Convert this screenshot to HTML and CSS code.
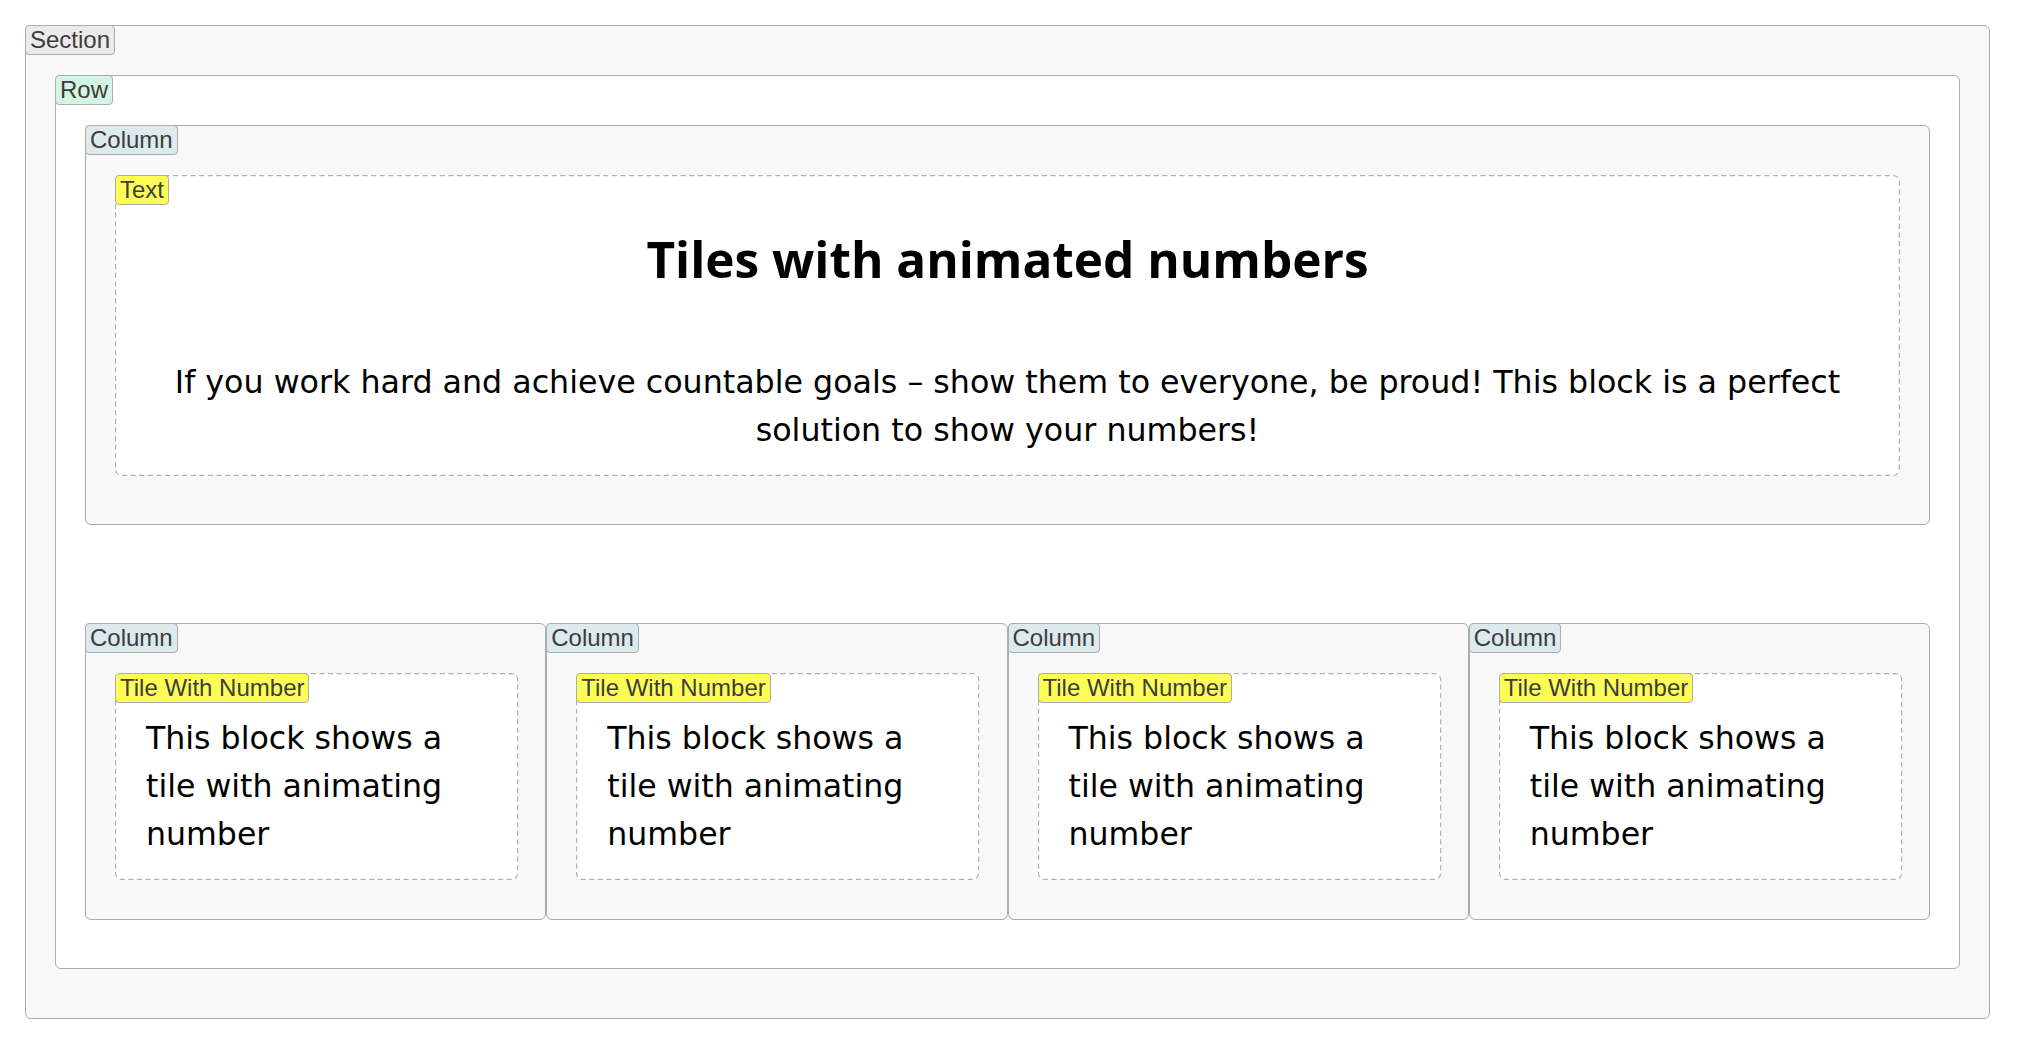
FILE: index.html
```html
<!DOCTYPE html>
<html lang="en">
<head>
<meta charset="utf-8">
<title>Tiles with animated numbers</title>
<link rel="stylesheet" href="styles.css">
</head>
<body>
<div class="box section">
  <span class="tag tag-section">Section</span>
  <div class="box row">
    <span class="tag tag-row">Row</span>
    <div class="box col col-wide">
      <span class="tag tag-col">Column</span>
      <div class="block text-block">
        <svg class="dash" aria-hidden="true"><rect class="dash-rect"></rect></svg>
        <span class="tag tag-block">Text</span>
        <h2 class="title">Tiles with animated numbers</h2>
        <p class="lead">If you work hard and achieve countable goals – show them to everyone, be proud! This block is a perfect solution to show your numbers!</p>
      </div>
    </div>
    <div class="cols">
      <div class="box col col-tile">
        <span class="tag tag-col">Column</span>
        <div class="block tile">
          <svg class="dash" aria-hidden="true"><rect class="dash-rect"></rect></svg>
          <span class="tag tag-block">Tile With Number</span>
          <p class="tile-text">This block shows a tile with animating number</p>
        </div>
      </div>
      <div class="box col col-tile">
        <span class="tag tag-col">Column</span>
        <div class="block tile">
          <svg class="dash" aria-hidden="true"><rect class="dash-rect"></rect></svg>
          <span class="tag tag-block">Tile With Number</span>
          <p class="tile-text">This block shows a tile with animating number</p>
        </div>
      </div>
      <div class="box col col-tile">
        <span class="tag tag-col">Column</span>
        <div class="block tile">
          <svg class="dash" aria-hidden="true"><rect class="dash-rect"></rect></svg>
          <span class="tag tag-block">Tile With Number</span>
          <p class="tile-text">This block shows a tile with animating number</p>
        </div>
      </div>
      <div class="box col col-tile">
        <span class="tag tag-col">Column</span>
        <div class="block tile">
          <svg class="dash" aria-hidden="true"><rect class="dash-rect"></rect></svg>
          <span class="tag tag-block">Tile With Number</span>
          <p class="tile-text">This block shows a tile with animating number</p>
        </div>
      </div>
    </div>
  </div>
</div>
</body>
</html>
```
FILE: styles.css
```css
* { box-sizing: border-box; }

html, body { background: #ffffff; }

body {
  margin: 0;
  padding: 25px 28px 0 25px;
  font-family: "DejaVu Sans", sans-serif;
  color: #000;
}

.box {
  position: relative;
  border: 1px solid #acacac;
  border-radius: 6px;
}

.section {
  background: #f8f8f8;
  padding: 49px 29px 49px 29px;
}

.row {
  background: #ffffff;
  padding: 49px 29px 48px 29px;
  display: flex;
  flex-direction: column;
  gap: 98px;
}

.col {
  background: #f8f8f8;
}

.col-wide {
  padding: 49px 29px 48px 29px;
}

.cols {
  display: flex;
}

.col-tile {
  flex: 1 1 0;
  min-width: 0;
  padding: 49px 27px 39px 29px;
}

.block {
  position: relative;
  background: #ffffff;
  border: 1px solid transparent;
  border-radius: 6px;
}

.dash {
  position: absolute;
  top: -1px;
  left: -1px;
  width: calc(100% + 2px);
  height: calc(100% + 2px);
  overflow: visible;
  pointer-events: none;
}

.dash-rect {
  x: 0.6px;
  y: 0.6px;
  width: calc(100% - 1.2px);
  height: calc(100% - 1.2px);
  rx: 6px;
  ry: 6px;
  fill: none;
  stroke: #b2b2b2;
  stroke-width: 1.2px;
  stroke-dasharray: 5.2 3.4;
}

.text-block {
  padding: 53px 30px 21px 30px;
  text-align: center;
}

.title {
  margin: 0 0 69px 0;
  font-family: "Open Sans", sans-serif;
  font-weight: 700;
  font-size: 49.5px;
  line-height: 60px;
}

.lead {
  margin: 0;
  font-size: 31.7px;
  line-height: 48px;
}

.tile {
  padding: 40px 30px 21px 30px;
}

.tile-text {
  margin: 0;
  font-size: 31.6px;
  line-height: 48px;
}

.tag {
  position: absolute;
  top: -1px;
  left: -1px;
  z-index: 1;
  padding: 0 4px;
  border: 1px solid #acacac;
  border-radius: 4px;
  font-family: "Liberation Sans", Arial, sans-serif;
  font-size: 24px;
  line-height: 28px;
  color: #3d3d3d;
  white-space: nowrap;
}

.tag-section { background: #ebebeb; }
.tag-row { background: #d5f5e4; }
.tag-col { background: #dce9ed; }
.tag-block { background: #fdfd55; }
```
